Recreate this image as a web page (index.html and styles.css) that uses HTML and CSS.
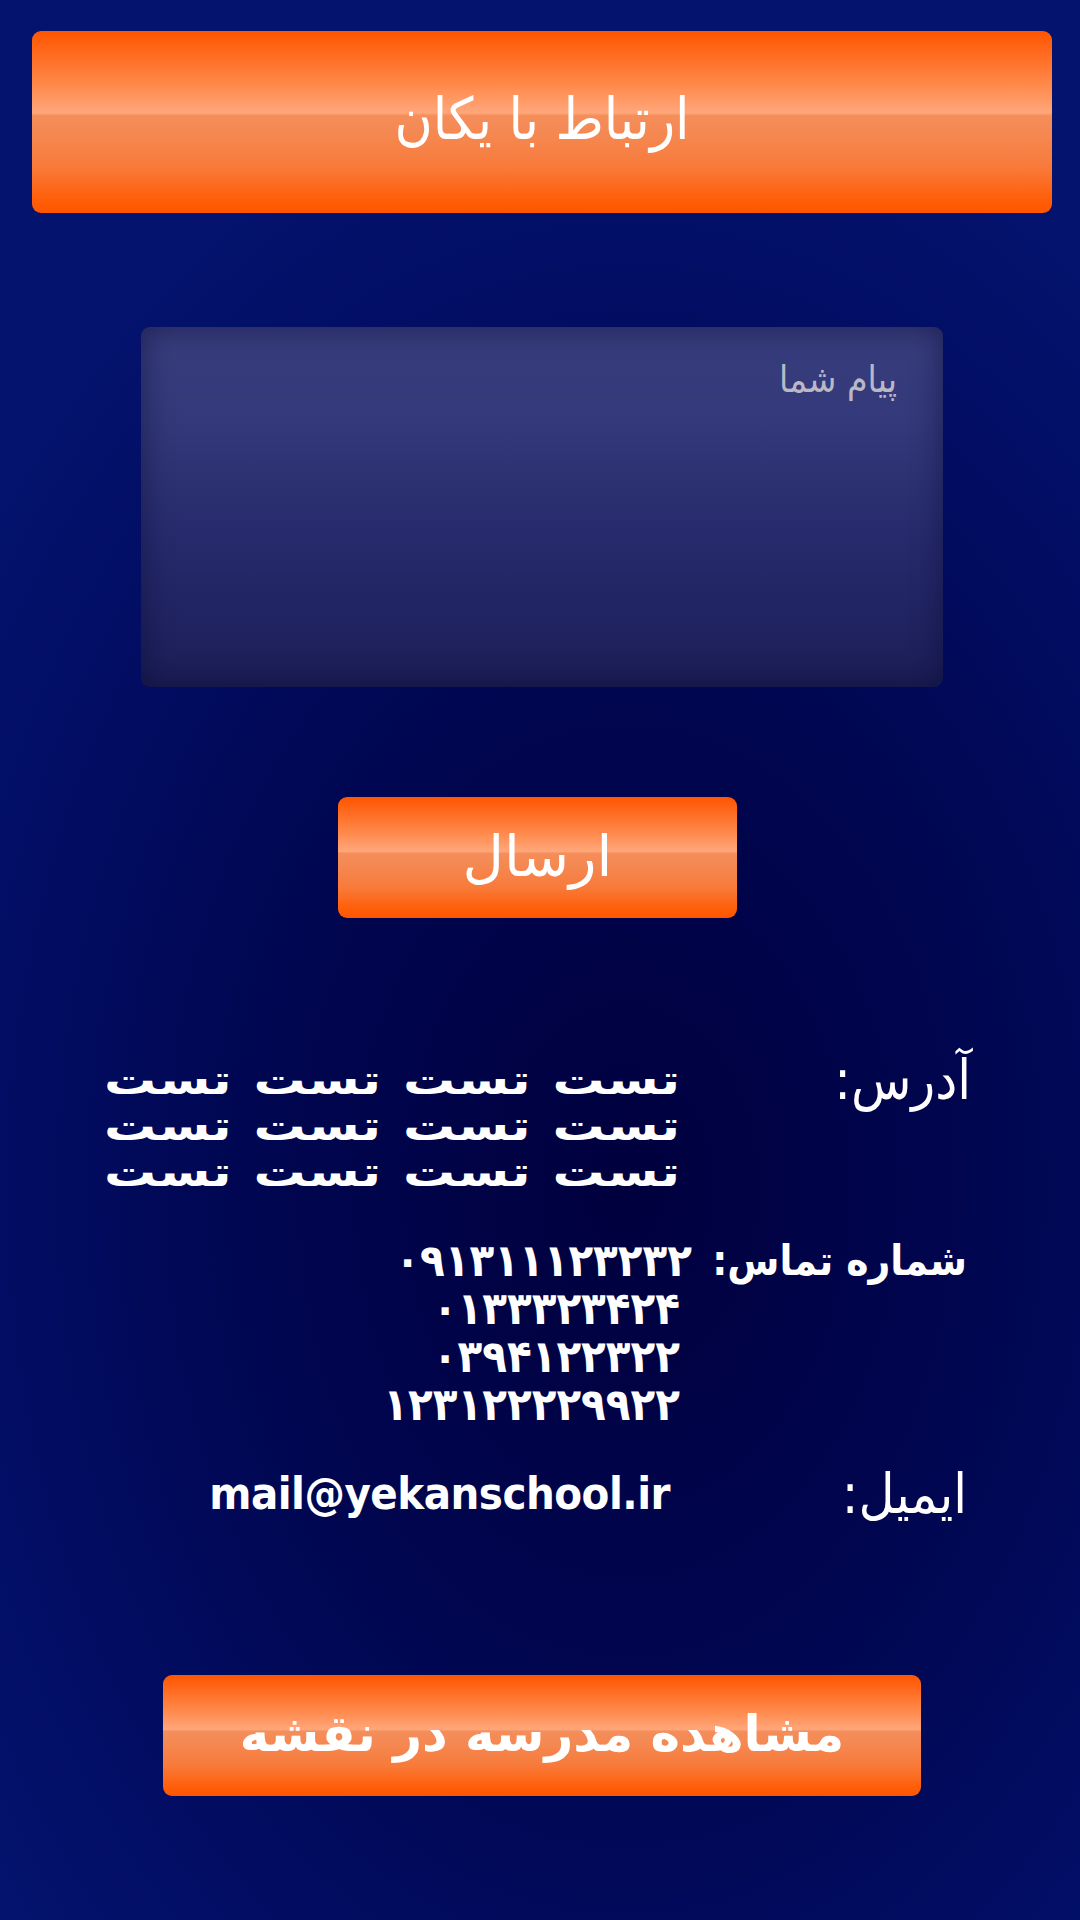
FILE: index.html
```html
<!DOCTYPE html>
<html lang="fa" dir="rtl">
<head>
<meta charset="utf-8">
<title>ارتباط با یکان</title>
<link rel="stylesheet" href="styles.css">
</head>
<body>
<div class="page">
  <div class="btn btn-header">ارتباط با یکان</div>
  <textarea class="msg" placeholder="پیام شما"></textarea>
  <div class="btn btn-send">ارسال</div>
  <div class="info">
    <div class="row row-addr">
      <div class="label">آدرس:</div>
      <div class="value addr">
        <div class="line">تست تست تست تست</div>
        <div class="line">تست تست تست تست</div>
        <div class="line">تست تست تست تست</div>
      </div>
    </div>
    <div class="row row-phone">
      <div class="label">شماره تماس:</div>
      <div class="value phones">
        <div class="ph first">۰۹۱۳۱۱۱۲۳۲۳۲</div>
        <div class="ph">۰۱۳۳۳۲۳۴۲۴</div>
        <div class="ph">۰۳۹۴۱۲۲۳۲۲</div>
        <div class="ph">۱۲۳۱۲۲۲۲۹۹۲۲</div>
      </div>
    </div>
    <div class="row row-mail">
      <div class="label">ایمیل:</div>
      <div class="value mail" dir="ltr">mail@yekanschool.ir</div>
    </div>
  </div>
  <div class="btn btn-map">مشاهده مدرسه در نقشه</div>
</div>
</body>
</html>
```
FILE: styles.css
```css
html, body {
  margin: 0;
  padding: 0;
}
body {
  width: 1080px;
  height: 1920px;
  overflow: hidden;
  background: radial-gradient(ellipse 75% 60% at 58% 62%, #00003e 0%, #000650 45%, #020d62 75%, #04136e 100%);
  font-family: "DejaVu Sans", sans-serif;
  color: #fff;
}
.page {
  padding: 31px 28px 0 32px;
}
.btn {
  display: flex;
  align-items: center;
  justify-content: center;
  box-sizing: border-box;
  border-radius: 9px;
  color: #fff;
  background: linear-gradient(to bottom,
    #ff5500 0%, #ff6a1e 12%, #ff8a4c 30%, #ffa172 42%, #ffa77a 45%,
    #f48e5b 46.5%, #f58750 58%, #f87a3a 75%, #ff5f0a 92%, #ff5500 100%);
}
.btn-header {
  height: 182px;
  font-family: "DejaVu Sans Condensed", "DejaVu Sans", sans-serif;
  font-size: 58px;
  padding-bottom: 6px;
}
.msg {
  display: block;
  width: 802px;
  height: 360px;
  margin: 114px 109px 0 auto;
  box-sizing: border-box;
  border: none;
  outline: none;
  resize: none;
  border-radius: 9px;
  padding: 29px 46px;
  background: linear-gradient(to bottom, #383d7d 0%, #33397a 25%, #262a6c 60%, #1b1e56 100%);
  box-shadow: inset 0 0 30px rgba(10, 10, 50, 0.55);
  font-family: "DejaVu Sans Condensed", "DejaVu Sans", sans-serif;
  font-size: 37px;
  line-height: 1.3;
  color: #ddd;
  direction: rtl;
}
.msg::placeholder {
  color: #b9b9c6;
}
.btn-send {
  width: 399px;
  height: 121px;
  margin: 110px 315px 0 auto;
  font-size: 57px;
  padding-bottom: 4px;
}
.info {
  margin-top: 139px;
  padding-right: 81px;
}
.row {
  display: flex;
  align-items: flex-start;
}
.label {
  flex: none;
  font-family: "DejaVu Sans Condensed", "DejaVu Sans", sans-serif;
  font-size: 55px;
}
.value {
  font-weight: bold;
}
.row-addr .label {
  width: 291px;
  line-height: 46px;
}
.addr {
  font-size: 40px;
  line-height: 46px;
  word-spacing: 3px;
}
.addr .line {
  height: 46px;
  white-space: nowrap;
  transform: scaleX(1.3);
  transform-origin: right center;
}
.row-phone {
  margin-top: 42px;
}
.row-phone .label {
  width: 275px;
  padding-right: 4px;
  font-size: 42px;
  font-weight: bold;
  line-height: 48px;
}
.phones {
  font-family: "DejaVu Sans Condensed", "DejaVu Sans", sans-serif;
  font-size: 45px;
  line-height: 48px;
}
.ph {
  margin-right: 12px;
}
.ph.first {
  margin-right: 0;
}
.row-mail {
  margin-top: 41px;
}
.row-mail .label {
  width: 297px;
  padding-right: 4px;
  line-height: 48px;
}
.mail {
  font-family: "DejaVu Sans Condensed", "DejaVu Sans", sans-serif;
  font-size: 45px;
  line-height: 48px;
  letter-spacing: -0.5px;
}
.btn-map {
  width: 758px;
  height: 121px;
  margin: 157px 131px 0 auto;
  font-size: 50px;
  font-weight: bold;
  padding-bottom: 4px;
}
```
